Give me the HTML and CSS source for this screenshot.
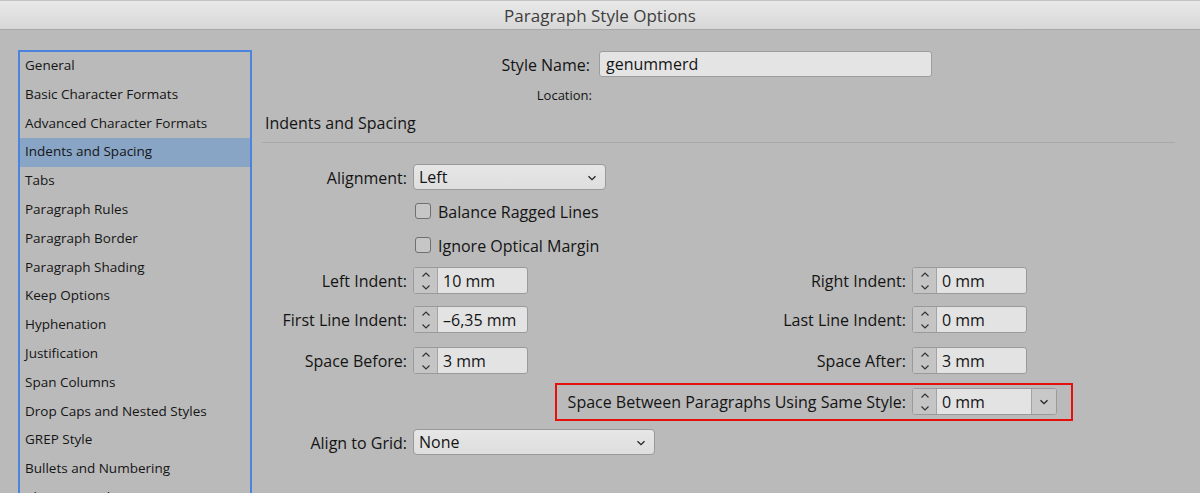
FILE: index.html
```html
<!DOCTYPE html>
<html>
<head>
  <meta name="viewport" content="width=device-width,initial-scale=1.0">
  <title>Paragraph Style Options</title>
  <link rel="stylesheet" href="styles.css">
</head>
<body>

  <div class="titlebar">Paragraph Style Options</div>

  <div class="main">
    <ul class="sections">
      <li>General</li>
      <li>Basic Character Formats</li>
      <li>Advanced Character Formats</li>
      <li class="active">Indents and Spacing</li>
      <li>Tabs</li>
      <li>Paragraph Rules</li>
      <li>Paragraph Border</li>
      <li>Paragraph Shading</li>
      <li>Keep Options</li>
      <li>Hyphenation</li>
      <li>Justification</li>
      <li>Span Columns</li>
      <li>Drop Caps and Nested Styles</li>
      <li>GREP Style</li>
      <li>Bullets and Numbering</li>
      <li>Character Color</li>
    </ul>

    <div class="panel">
      <div class="name-row">
        <label class="name-label">Style Name:</label>
        <div class="text-field">genummerd</div>
      </div>
      <div class="location-row">
        <span class="location-label">Location:</span>
      </div>
      <div class="heading">Indents and Spacing</div>

      <div class="fields">
        <div class="row r34">
          <span class="lbl">Alignment:</span>
          <div class="select align-select">Left<svg class="chev" width="10" height="6" viewBox="0 0 10 6"><path d="M1.5 1.2 L5 4.6 L8.5 1.2" fill="none" stroke="#222" stroke-width="1.3"/></svg></div>
        </div>
        <div class="row r34 indent">
          <span class="check"></span><span>Balance Ragged Lines</span>
        </div>
        <div class="row r34 indent">
          <span class="check"></span><span>Ignore Optical Margin</span>
        </div>

        <div class="row r37">
          <div class="cell-left">
            <span class="lbl">Left Indent:</span>
            <div class="spin"><span class="step"><svg width="12" height="22" viewBox="0 0 12 22"><path d="M2.5 6.5 L6 3 L9.5 6.5 M2.5 15.5 L6 19 L9.5 15.5" fill="none" stroke="#333" stroke-width="1.2"/></svg></span><span class="val">10 mm</span></div>
          </div>
          <div class="cell-right">
            <span class="rlbl">Right Indent:</span>
            <div class="spin"><span class="step"><svg width="12" height="22" viewBox="0 0 12 22"><path d="M2.5 6.5 L6 3 L9.5 6.5 M2.5 15.5 L6 19 L9.5 15.5" fill="none" stroke="#333" stroke-width="1.2"/></svg></span><span class="val">0 mm</span></div>
          </div>
        </div>

        <div class="row r41">
          <div class="cell-left">
            <span class="lbl">First Line Indent:</span>
            <div class="spin"><span class="step"><svg width="12" height="22" viewBox="0 0 12 22"><path d="M2.5 6.5 L6 3 L9.5 6.5 M2.5 15.5 L6 19 L9.5 15.5" fill="none" stroke="#333" stroke-width="1.2"/></svg></span><span class="val">&ndash;6,35 mm</span></div>
          </div>
          <div class="cell-right">
            <span class="rlbl">Last Line Indent:</span>
            <div class="spin"><span class="step"><svg width="12" height="22" viewBox="0 0 12 22"><path d="M2.5 6.5 L6 3 L9.5 6.5 M2.5 15.5 L6 19 L9.5 15.5" fill="none" stroke="#333" stroke-width="1.2"/></svg></span><span class="val">0 mm</span></div>
          </div>
        </div>

        <div class="row r41">
          <div class="cell-left">
            <span class="lbl">Space Before:</span>
            <div class="spin"><span class="step"><svg width="12" height="22" viewBox="0 0 12 22"><path d="M2.5 6.5 L6 3 L9.5 6.5 M2.5 15.5 L6 19 L9.5 15.5" fill="none" stroke="#333" stroke-width="1.2"/></svg></span><span class="val">3 mm</span></div>
          </div>
          <div class="cell-right">
            <span class="rlbl">Space After:</span>
            <div class="spin"><span class="step"><svg width="12" height="22" viewBox="0 0 12 22"><path d="M2.5 6.5 L6 3 L9.5 6.5 M2.5 15.5 L6 19 L9.5 15.5" fill="none" stroke="#333" stroke-width="1.2"/></svg></span><span class="val">3 mm</span></div>
          </div>
        </div>

        <div class="row r41">
          <div class="highlight">
            <span class="hl-lbl">Space Between Paragraphs Using Same Style:</span>
            <div class="spin spin-drop"><span class="step"><svg width="12" height="22" viewBox="0 0 12 22"><path d="M2.5 6.5 L6 3 L9.5 6.5 M2.5 15.5 L6 19 L9.5 15.5" fill="none" stroke="#333" stroke-width="1.2"/></svg></span><span class="val">0 mm</span><span class="drop"><svg width="10" height="6" viewBox="0 0 10 6"><path d="M1.5 1.2 L5 4.6 L8.5 1.2" fill="none" stroke="#222" stroke-width="1.3"/></svg></span></div>
          </div>
        </div>

        <div class="row r40">
          <span class="lbl">Align to Grid:</span>
          <div class="select grid-select">None<svg class="chev" width="10" height="6" viewBox="0 0 10 6"><path d="M1.5 1.2 L5 4.6 L8.5 1.2" fill="none" stroke="#222" stroke-width="1.3"/></svg></div>
        </div>
      </div>
    </div>
  </div>

</body>
</html>
```

FILE: styles.css
```css
body { margin: 0; width: 1200px; height: 493px; overflow: hidden; background: #bababa; font-family: "Open Sans", "Liberation Sans", sans-serif; color: #141414; }

.titlebar { height: 28px; border-top: 1px solid #c4c4c4; border-bottom: 1px solid #a9a9a9; background: linear-gradient(#e9e9e9, #d7d7d7); text-align: center; font-size: 17px; line-height: 30px; color: #3d3d3d; }

.main { display: flex; padding: 20px 0 0 18px; }

.sections { list-style: none; margin: 0; padding: 0; width: 230px; height: 443px; flex-shrink: 0; border: 2px solid #4a84de; border-bottom: none; overflow: hidden; }
.sections li { height: 28.8px; line-height: 27px; padding-left: 5px; font-size: 13.5px; font-weight: 500; color: #151515; white-space: nowrap; }
.sections li.active { background: #88a5c6; }

.panel { width: 913px; margin-left: 10px; }

.name-row { display: flex; align-items: center; height: 28px; }
.name-label { width: 328px; text-align: right; font-size: 16px; margin-right: 9px; padding-top: 1px; }
.text-field { width: 333px; height: 26px; box-sizing: border-box; border: 1px solid #9d9d9d; border-radius: 3px; background: #e4e4e4; padding-left: 6px; font-size: 16px; line-height: 25px; }

.location-row { height: 34px; display: flex; align-items: center; }
.location-label { width: 330px; text-align: right; font-size: 13px; font-weight: 500; }

.heading { height: 30px; line-height: 23px; padding-left: 3px; font-size: 16px; border-bottom: 1px solid #a8a8a8; }

.fields { margin-top: 17px; }
.row { display: flex; align-items: center; font-size: 16px; white-space: nowrap; }
.r34 { height: 34px; }
.r37 { height: 37px; }
.r40 { height: 40px; }
.r41 { height: 41px; }
.row.indent { padding-left: 153px; }
.row > span, .lbl, .rlbl, .hl-lbl { padding-top: 1px; }

.lbl { width: 145px; text-align: right; margin-right: 6px; flex-shrink: 0; }
.cell-left { display: flex; align-items: center; width: 266px; }
.cell-right { display: flex; align-items: center; margin-left: 6px; }
.rlbl { width: 372px; text-align: right; margin-right: 6px; }

.select { position: relative; height: 26px; box-sizing: border-box; border: 1px solid #9a9a9a; border-radius: 4px; background: linear-gradient(#e6e6e6, #dedede); padding-left: 5px; line-height: 25px; }
.select .chev { position: absolute; right: 8px; top: 10px; }
.align-select { width: 193px; }
.grid-select { width: 242px; }

.row > .check { width: 14px; height: 14px; padding: 0; border: 1px solid #707070; border-radius: 3px; background: #c6c6c6; margin-right: 7px; flex-shrink: 0; }

.spin { display: flex; width: 115px; height: 27px; box-sizing: border-box; border: 1px solid #9a9a9a; border-radius: 3px; overflow: hidden; background: #e3e3e3; }
.spin .step { width: 23px; border-right: 1px solid #a3a3a3; background: #c5c5c5; display: flex; align-items: center; justify-content: center; flex-shrink: 0; }
.spin .val { flex: 1; padding-left: 5px; line-height: 26px; }
.spin-drop { width: 145px; }
.spin-drop .drop { width: 24px; border-left: 1px solid #a3a3a3; background: #c8c8c8; display: flex; align-items: center; justify-content: center; }

.highlight { display: flex; align-items: center; margin-left: 293px; width: 518px; height: 38px; box-sizing: border-box; border: 2px solid #e4100c; padding: 0 14px 0 6px; }
.hl-lbl { flex: 1; text-align: right; margin-right: 6px; }
```
